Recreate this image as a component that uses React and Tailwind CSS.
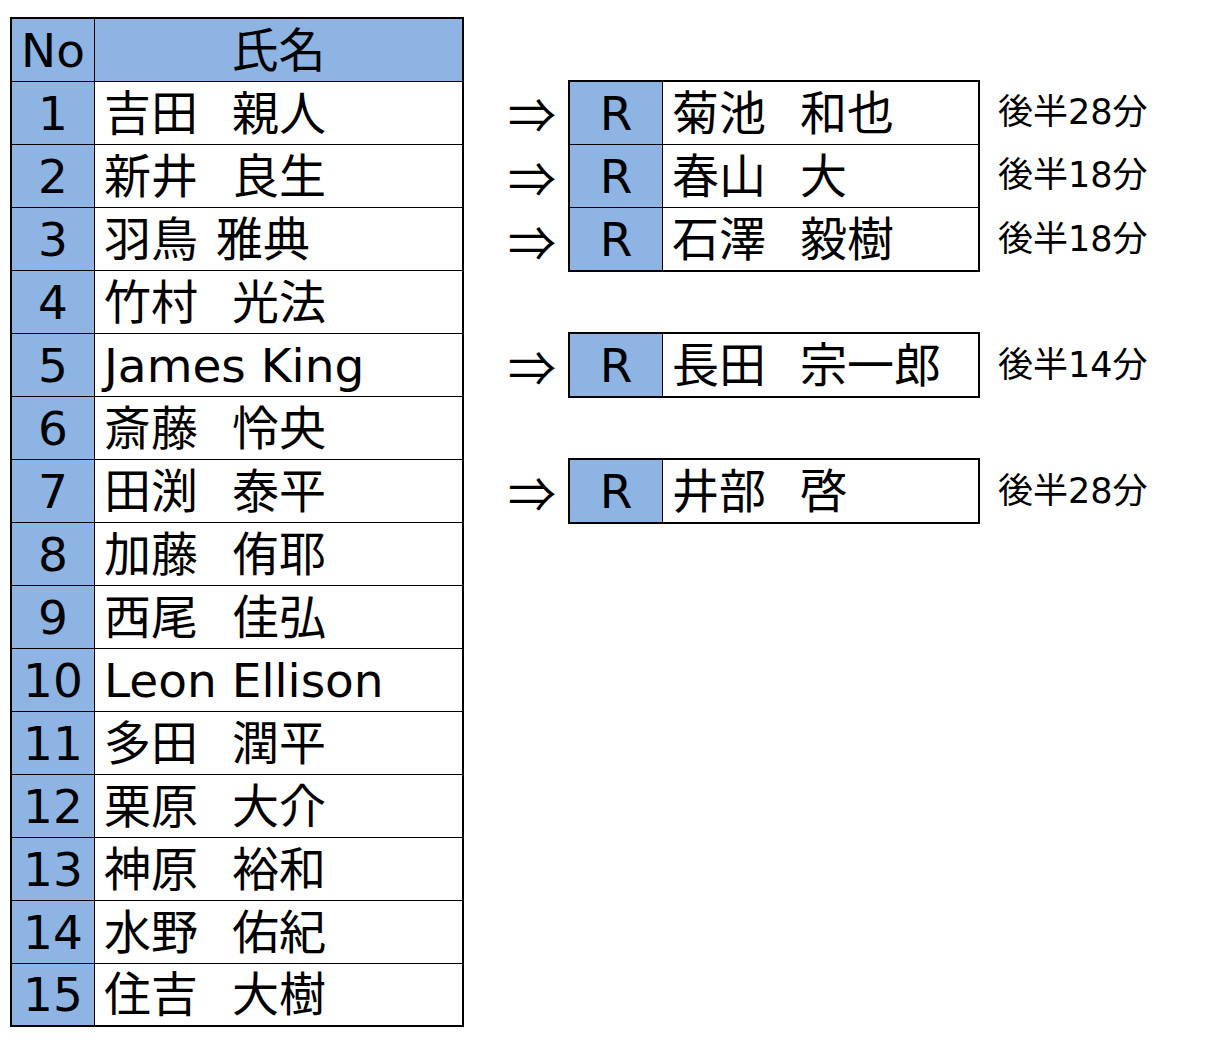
import React from 'react'
import clsx from 'clsx'

const PLAYERS = [
  { no: 1, last: '吉田', first: '親人' },
  { no: 2, last: '新井', first: '良生' },
  { no: 3, last: '羽鳥', first: '雅典', tight: true },
  { no: 4, last: '竹村', first: '光法' },
  { no: 5, full: 'James King' },
  { no: 6, last: '斎藤', first: '怜央' },
  { no: 7, last: '田渕', first: '泰平' },
  { no: 8, last: '加藤', first: '侑耶' },
  { no: 9, last: '西尾', first: '佳弘' },
  { no: 10, full: 'Leon Ellison' },
  { no: 11, last: '多田', first: '潤平' },
  { no: 12, last: '栗原', first: '大介' },
  { no: 13, last: '神原', first: '裕和' },
  { no: 14, last: '水野', first: '佑紀' },
  { no: 15, last: '住吉', first: '大樹' },
]

// substitutions, grouped by adjacent rows
const SUBS = [
  [
    { last: '菊池', first: '和也', time: '後半28分' },
    { last: '春山', first: '大', time: '後半18分' },
    { last: '石澤', first: '毅樹', time: '後半18分' },
  ],
  [{ last: '長田', first: '宗一郎', time: '後半14分' }],
  [{ last: '井部', first: '啓', time: '後半28分' }],
]

const FONT = "font-['DejaVu_Sans','Noto_Sans_CJK_JP',sans-serif]"

function Name({ p }) {
  if (p.full) return <span className="text-[47px]">{p.full}</span>
  return (
    <span className="flex">
      <span className={p.tight ? 'w-[112px]' : 'w-[128px]'}>{p.last}</span>
      <span>{p.first}</span>
    </span>
  )
}

function SubRow({ s, first, last }) {
  return (
    <div className="flex items-stretch">
      <div className="w-[104px] flex items-center justify-end pr-[12px] font-['Noto_Sans_CJK_JP',sans-serif] text-[48px]">
        ⇒
      </div>
      <div
        className={clsx(
          'flex border-x-2 border-black',
          first ? 'border-t-2' : 'border-t',
          last && 'border-b-2'
        )}
      >
        <div className="w-[93px] h-[62px] bg-[#8db4e2] border-r border-black flex items-center justify-center">
          R
        </div>
        <div className="w-[315px] h-[62px] flex items-center pl-[9px]">
          <Name p={s} />
        </div>
      </div>
      <div className="pl-[18px] flex items-center text-[35px]">{s.time}</div>
    </div>
  )
}

export default function App() {
  return (
    <div className={clsx('w-[1209px] h-[1041px] bg-white text-black flex items-start text-[47px] leading-none', FONT)}>
      {/* roster table */}
      <div className="ml-[10px] mt-[17px] w-[454px] border-2 border-black">
        <div className="flex border-b border-black bg-[#8db4e2] h-[63px]">
          <div className="w-[83px] border-r border-black flex items-center justify-center">No</div>
          <div className="flex-1 flex items-center justify-center">氏名</div>
        </div>
        {PLAYERS.map((p, i) => (
          <div
            key={p.no}
            className={clsx(
              'flex',
              i < PLAYERS.length - 1 ? 'h-[63px] border-b border-black' : 'h-[61px]'
            )}
          >
            <div className="w-[83px] bg-[#8db4e2] border-r border-black flex items-center justify-center">
              {p.no}
            </div>
            <div className="flex-1 flex items-center pl-[9px]">
              <Name p={p} />
            </div>
          </div>
        ))}
      </div>

      {/* substitutes */}
      <div className="mt-[80px] flex flex-col gap-[60px]">
        {SUBS.map((group, gi) => (
          <div key={gi}>
            {group.map((s, i) => (
              <SubRow key={s.last} s={s} first={i === 0} last={i === group.length - 1} />
            ))}
          </div>
        ))}
      </div>
    </div>
  )
}
